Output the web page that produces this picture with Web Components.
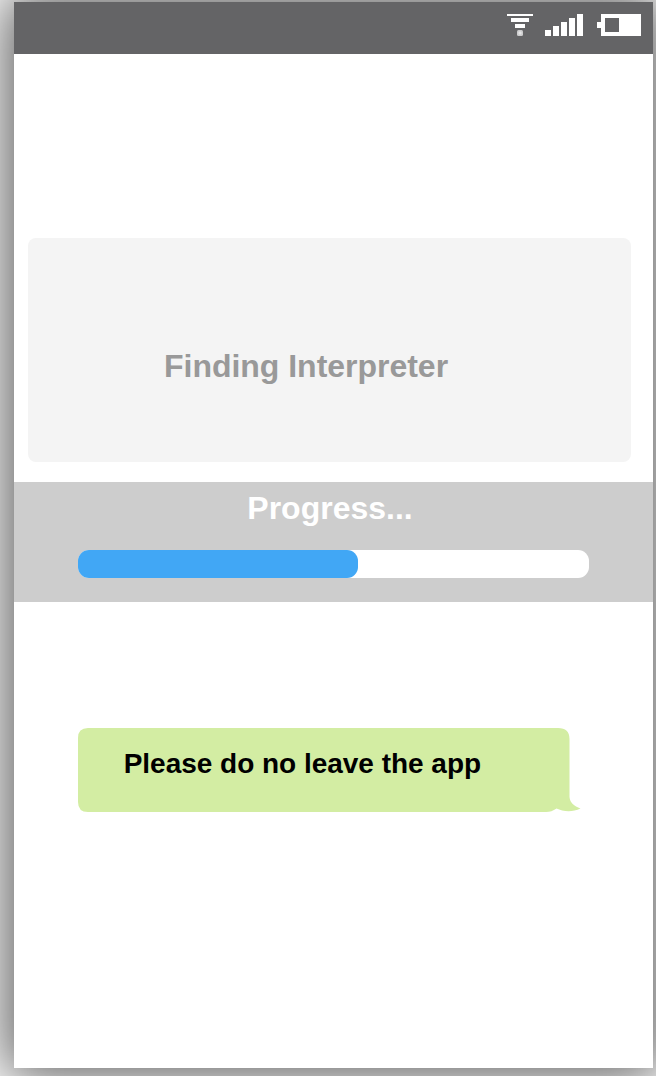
<!DOCTYPE html>
<html lang="en">
<head>
<meta charset="utf-8">
<title>Finding Interpreter</title>
<style>
html, body { margin: 0; height: 100%; overflow: hidden; background: #fff; }
body { font-family: "Liberation Sans", Arial, sans-serif; font-weight: 700; }
</style>
</head>
<body>
<phone-screen>
  <status-bar slot="status"></status-bar>
  <info-card>Finding Interpreter</info-card>
  <progress-band value="279.5">Progress...</progress-band>
  <chat-bubble>Please do no leave the app</chat-bubble>
</phone-screen>
<script>
class BaseElement extends HTMLElement {
  constructor() {
    super();
    this.attachShadow({ mode: 'open' }).innerHTML = this.constructor.markup;
  }
}

customElements.define('phone-screen', class extends BaseElement {
  static markup = `<style>
    :host { display: block; box-sizing: border-box; height: 1076px; padding: 2px 3px 8px 14px; overflow: hidden; }
    main { height: 1066px; display: flex; flex-direction: column; background: #fff; box-shadow: 0 0 54px 9px rgba(0,0,0,.64); }
  </style><main><slot name="status"></slot><slot></slot></main>`;
});

customElements.define('status-bar', class extends BaseElement {
  static markup = `<style>
    :host { display: flex; box-sizing: border-box; height: 52px; flex: none; justify-content: flex-end; align-items: flex-start; padding: 12px 12px 0 0; background: #646466; color: #fff; }
    svg { display: block; fill: currentColor; }
    .wifi { margin-right: 12px; }
    .signal { margin-right: 14px; }
  </style>
  <svg class="wifi" width="26" height="22"><path d="M0 0h26v2H0zM4 4h18v4H4zM8 10h10v4H8z"/><rect x="10" y="16" width="6" height="6" rx="1.500" opacity=".68"/><rect x="11.500" y="17.500" width="3" height="3" rx="1" opacity=".5"/></svg>
  <svg class="signal" width="38" height="22"><path d="M0 16h6v6H0zM8 12h6v10H8zM16 8h6v14h-6zM24 4h6v18h-6zM32 0h6v22h-6z"/></svg>
  <svg width="44" height="22"><path fill-rule="evenodd" d="M4 0h40v22H4v-8H0V8h4zM8 4v14h14V4z"/></svg>`;
});

customElements.define('info-card', class extends BaseElement {
  static markup = `<style>
    :host { display: flex; box-sizing: border-box; height: 224px; flex: none; margin: 184px 22px 0 14px; padding: 110px 0 0 136px; border-radius: 8px; background: #f4f4f4; color: #999; font-size: 32px; line-height: 36px; letter-spacing: -.02px; }
  </style><span><slot></slot></span>`;
});

customElements.define('progress-band', class extends BaseElement {
  static markup = `<style>
    :host { display: flex; flex-direction: column; box-sizing: border-box; height: 120px; flex: none; margin-top: 20px; padding: 8px 64px 0; background: #cdcdcd; color: #fff; font-size: 32px; line-height: 36px; }
    span { padding-left: 169.300px; }
    .track { margin-top: 24px; height: 28px; border-radius: 11px; background: #fff; }
    .fill { height: 28px; border-radius: 11px; background: #41a7f5; }
  </style><span><slot></slot></span><div class="track"><div class="fill"></div></div>`;
  connectedCallback() {
    this.shadowRoot.querySelector('.fill').style.width = this.getAttribute('value') + 'px';
  }
});

customElements.define('chat-bubble', class extends BaseElement {
  static markup = `<style>
    :host { display: grid; width: 504px; height: 86px; flex: none; margin: 126px 0 0 64px; color: #000; font-size: 28px; line-height: 32px; letter-spacing: -.02px; }
    svg, span { grid-area: 1 / 1; }
    span { padding: 20px 0 0 45.700px; }
  </style>
  <svg width="504" height="86"><path fill="#d3eda3" d="M10 0H480Q491.500 0 491.500 11V69C492 75 496 78 502.500 80.500C494 84.500 485 83.500 478.500 80.500C475 83 472 84 468 84H10Q0 84 0 74V10Q0 0 10 0Z"/></svg>
  <span><slot></slot></span>`;
});
</script>
</body>
</html>
